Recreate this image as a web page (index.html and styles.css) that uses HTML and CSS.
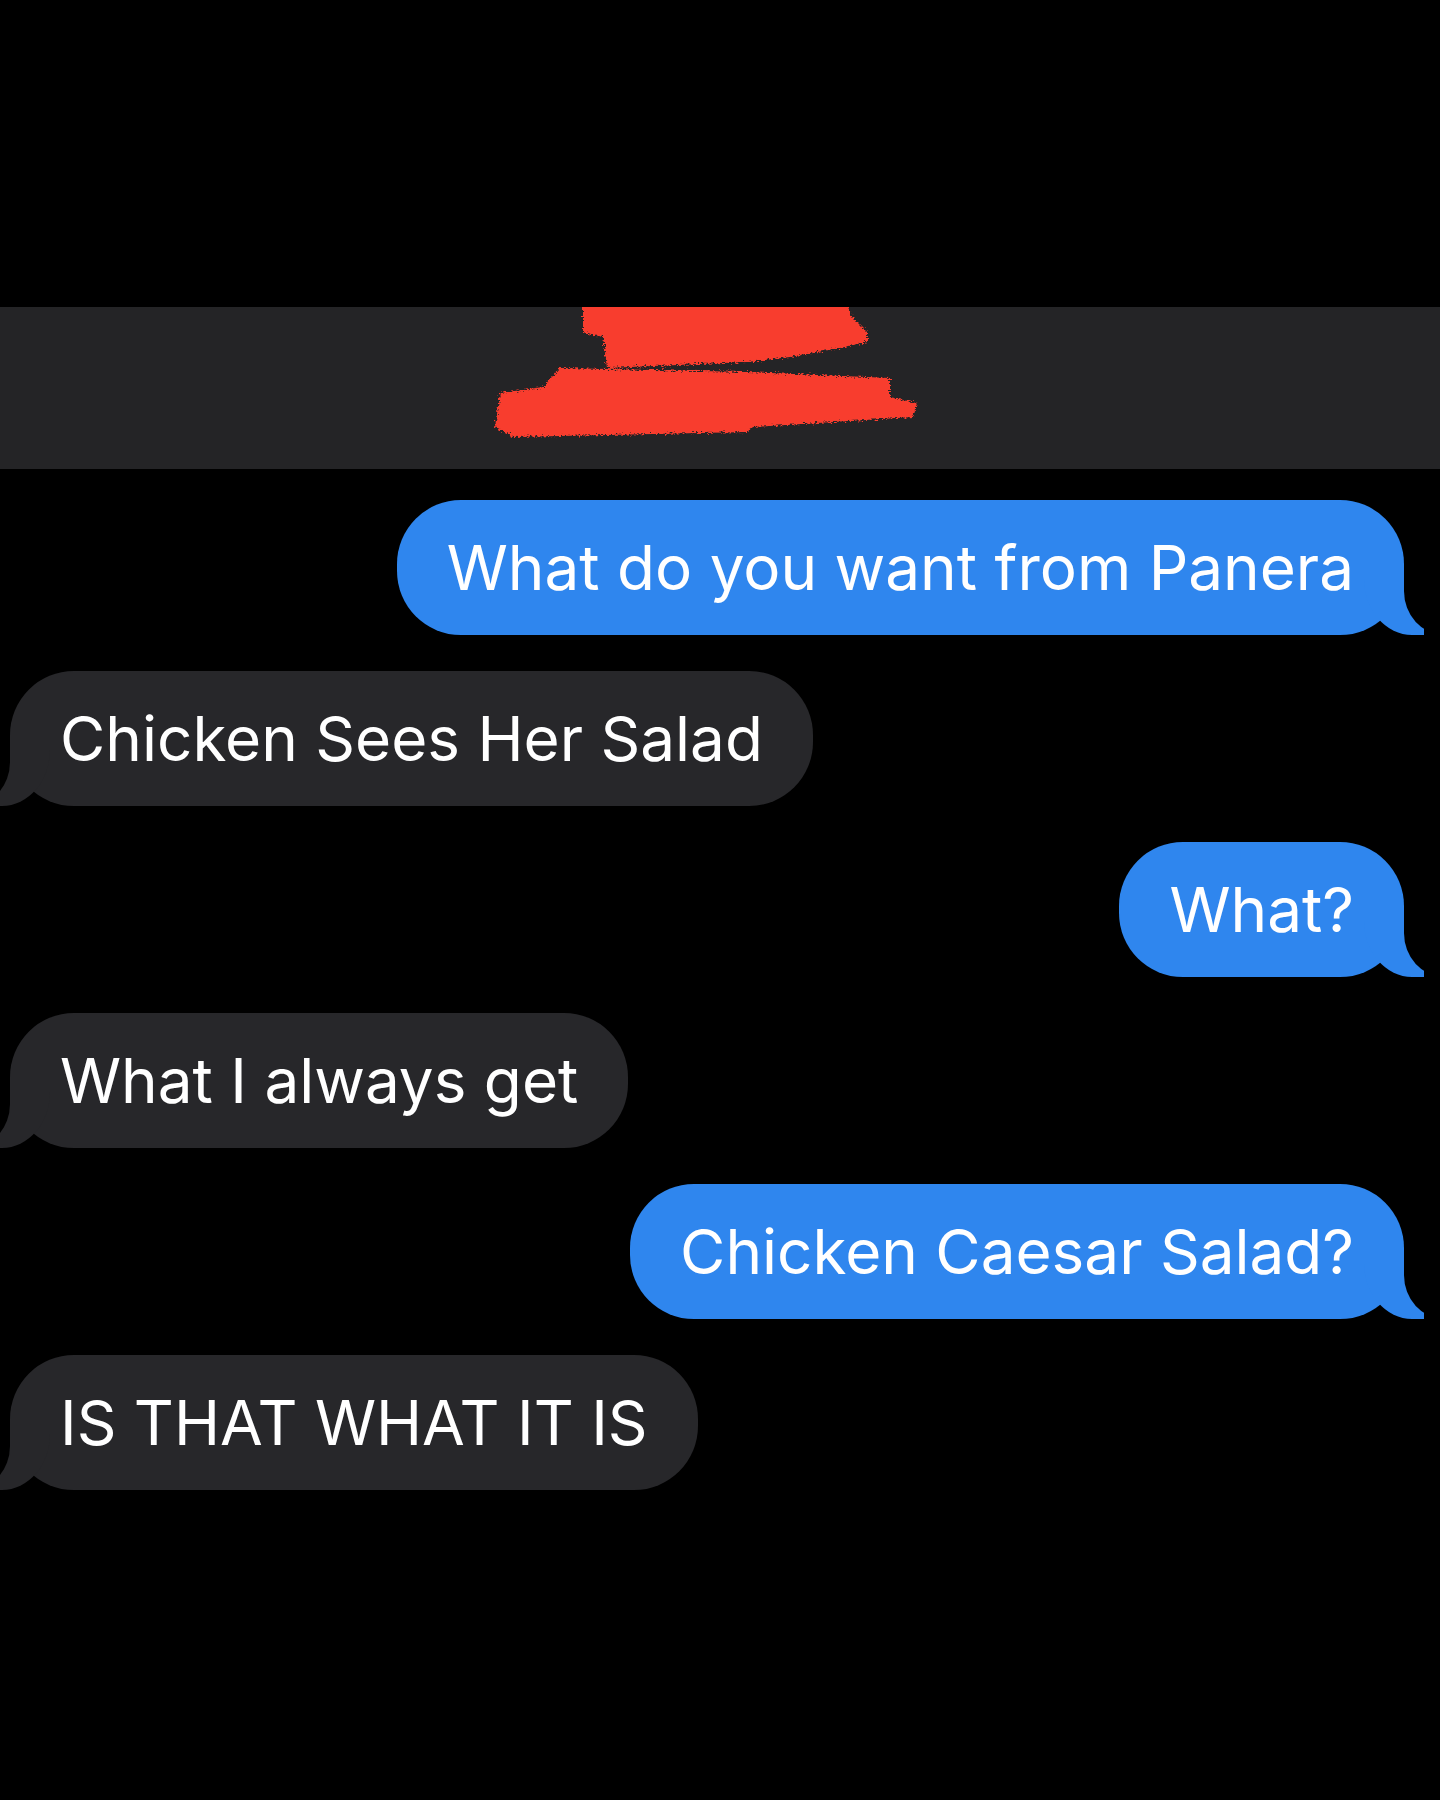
FILE: index.html
```html
<!DOCTYPE html>
<html lang="en">
<head>
<meta charset="utf-8">
<title>Messages</title>
<link rel="stylesheet" href="styles.css">
</head>
<body>
<div class="screen">
  <header class="convo-header">
    <svg class="redact" width="440" height="162" viewBox="0 0 440 162" aria-hidden="true">
      <defs>
        <filter id="rough" x="-10%" y="-10%" width="120%" height="120%">
          <feTurbulence type="fractalNoise" baseFrequency="0.35 0.9" numOctaves="2" seed="4" result="noise"/>
          <feDisplacementMap in="SourceGraphic" in2="noise" scale="7" xChannelSelector="R" yChannelSelector="G"/>
        </filter>
      </defs>
      <g filter="url(#rough)" fill="#f83c2d">
        <polygon points="93,-4 357,-4 362,10 377,25 377,35 350,41 300,50 257,55 117,61 113,30 93,26"/>
        <polygon points="70,61 53,80 10,86 5,120 23,130 257,125 263,120 423,110 427,96 400,90 400,71 257,65"/>
      </g>
    </svg>
  </header>
  <main class="thread">
    <div class="row sent"><div class="bubble">What do you want from Panera</div></div>
    <div class="row recv"><div class="bubble">Chicken Sees Her Salad</div></div>
    <div class="row sent"><div class="bubble">What?</div></div>
    <div class="row recv"><div class="bubble">What I always get</div></div>
    <div class="row sent"><div class="bubble">Chicken Caesar Salad?</div></div>
    <div class="row recv"><div class="bubble">IS THAT WHAT IT IS</div></div>
  </main>
</div>
</body>
</html>
```
FILE: styles.css
```css
html, body {
  margin: 0;
  padding: 0;
  background: #000;
}

.screen {
  min-height: 1800px;
  padding-top: 307px;
  box-sizing: border-box;
  background: #000;
  overflow: hidden;
  font-family: Inter, "Liberation Sans", Arial, sans-serif;
}

.convo-header {
  height: 162px;
  background: #242426;
  display: flex;
  justify-content: center;
  padding-right: 20px;
  overflow: hidden;
}

.redact {
  display: block;
}

.thread {
  display: flex;
  flex-direction: column;
  gap: 36px;
  padding: 31px 36px 0 10px;
}

.row {
  display: flex;
}

.row.sent {
  justify-content: flex-end;
}

.row.recv {
  justify-content: flex-start;
}

.bubble {
  position: relative;
  padding: 30px 50px;
  line-height: 75px;
  font-size: 62px;
  font-weight: 400;
  color: #fff;
  border-radius: 64px;
  white-space: nowrap;
}

.sent .bubble {
  background: #2f86ee;
}

.recv .bubble {
  background: #27272a;
}

.bubble::before,
.bubble::after {
  content: "";
  position: absolute;
  bottom: 0;
}

.sent .bubble::before {
  right: -20px;
  width: 60px;
  height: 70px;
  background: #2f86ee;
  border-bottom-left-radius: 48px 56px;
}

.sent .bubble::after {
  right: -80px;
  width: 80px;
  height: 70px;
  background: #000;
  border-bottom-left-radius: 40px 44px;
}

.recv .bubble::before {
  left: -20px;
  width: 60px;
  height: 70px;
  background: #27272a;
  border-bottom-right-radius: 48px 56px;
}

.recv .bubble::after {
  left: -80px;
  width: 80px;
  height: 70px;
  background: #000;
  border-bottom-right-radius: 40px 44px;
}
```
